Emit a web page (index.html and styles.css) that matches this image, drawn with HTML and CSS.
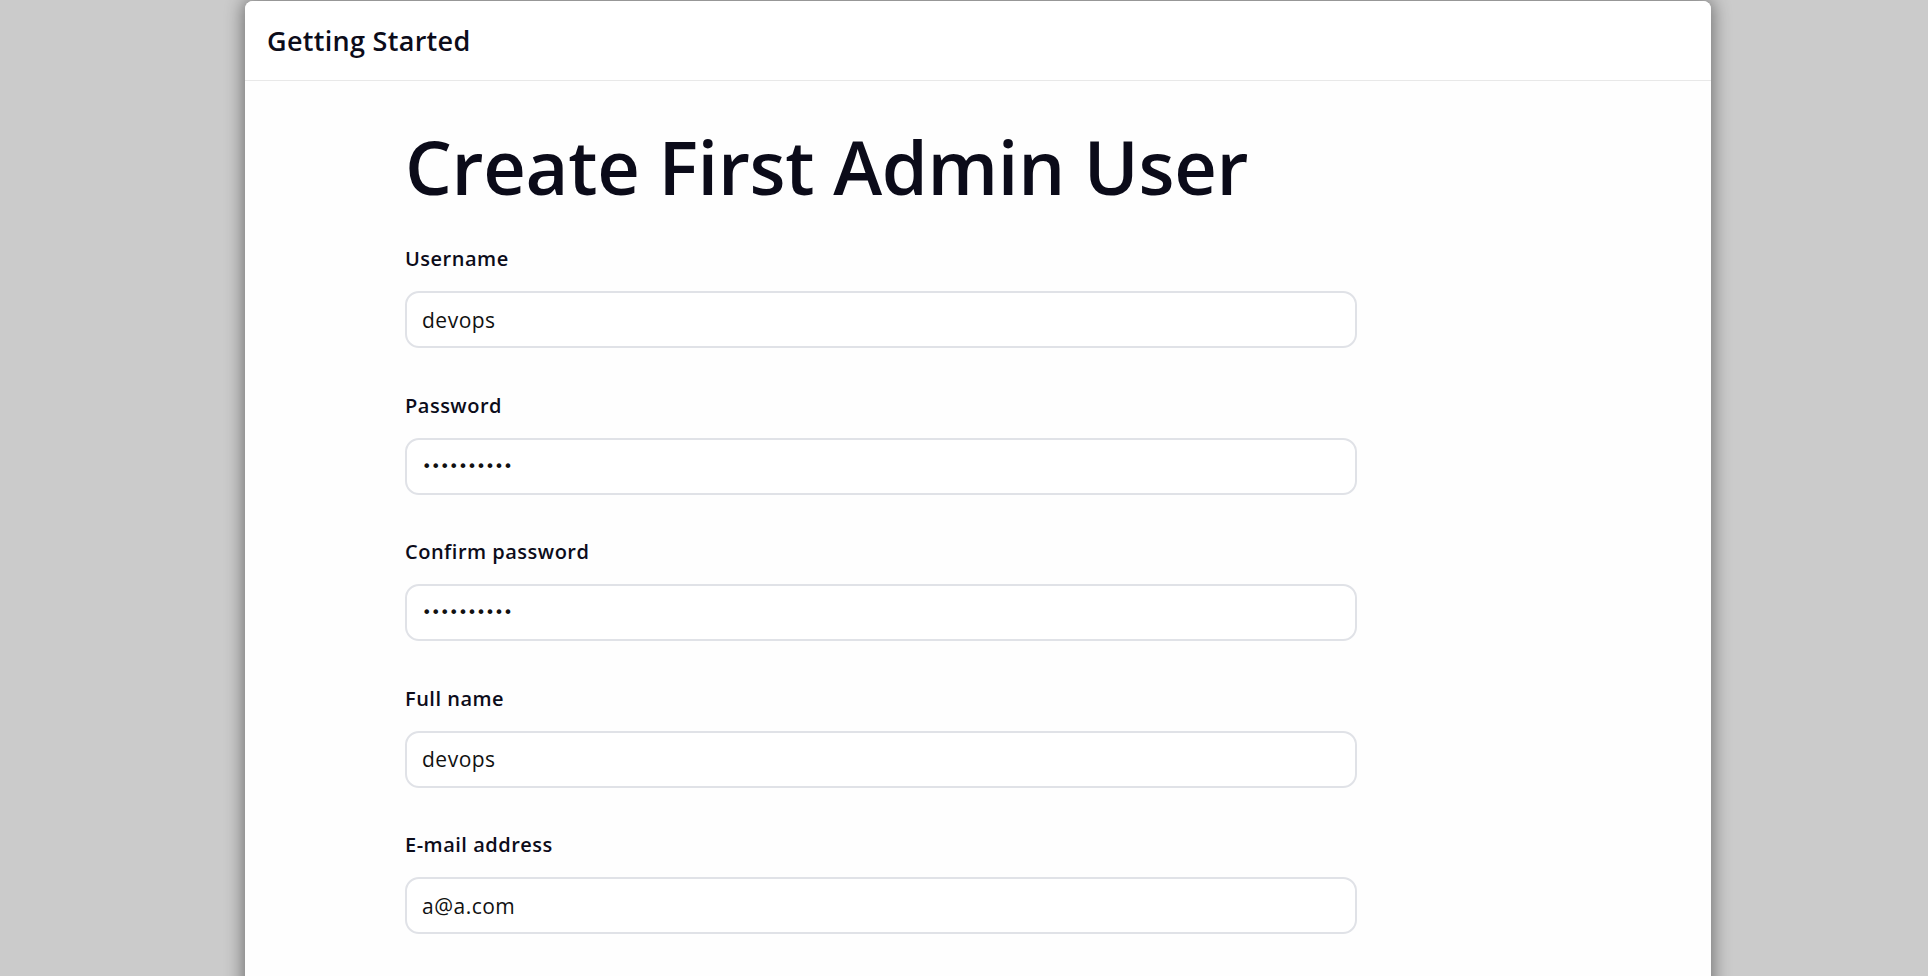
FILE: index.html
```html
<!DOCTYPE html>
<html lang="en">
<head>
<meta charset="utf-8">
<title>Getting Started</title>
<link rel="stylesheet" href="styles.css">
</head>
<body>
<div class="page">
  <div class="card">
    <div class="card-header">Getting Started</div>
    <div class="card-body">
      <h1 class="title">Create First Admin User</h1>
      <form class="form">
        <div class="field">
          <label class="label" for="u">Username</label>
          <input class="input" id="u" type="text" value="devops">
        </div>
        <div class="field">
          <label class="label" for="p">Password</label>
          <input class="input input-pw" id="p" type="password" value="devopsdevo">
        </div>
        <div class="field">
          <label class="label" for="c">Confirm password</label>
          <input class="input input-pw" id="c" type="password" value="devopsdevo">
        </div>
        <div class="field">
          <label class="label" for="f">Full name</label>
          <input class="input" id="f" type="text" value="devops">
        </div>
        <div class="field">
          <label class="label" for="e">E-mail address</label>
          <input class="input" id="e" type="text" value="a@a.com">
        </div>
      </form>
    </div>
  </div>
</div>
</body>
</html>
```
FILE: styles.css
```css
* { box-sizing: border-box; }
html, body {
  margin: 0;
  padding: 0;
  height: 100%;
  overflow: hidden;
  background: #cbcbcb;
  font-family: "Open Sans", "Noto Sans", sans-serif;
  color: #0c0c1a;
}
.page {
  padding: 1px 0 0 245px;
}
.card {
  width: 1466px;
  height: 1200px;
  background: #fefefe;
  border-radius: 8px 8px 0 0;
  box-shadow: 0 0 18px 2px rgba(0,0,0,0.45);
}
.card-header {
  height: 80px;
  padding: 0 0 0 22px;
  display: flex;
  align-items: center;
  font-size: 27px;
  font-weight: 600;
  border-bottom: 1px solid #e8e8e8;
  background: #fff;
  border-radius: 8px 8px 0 0;
  letter-spacing: 0.3px;
}
.card-body {
  padding: 0 0 0 160px;
}
.title {
  margin: 0;
  padding-top: 40px;
  height: 163px;
  font-size: 74px;
  font-weight: 600;
  line-height: 92px;
  letter-spacing: -0.3px;
  color: #0b0b19;
}
.form {
  display: flex;
  flex-direction: column;
  width: 952px;
}
.field {
  display: flex;
  flex-direction: column;
  margin-bottom: 42.5px;
}
.label {
  font-size: 20px;
  line-height: 30px;
  font-weight: 600;
  margin-bottom: 17px;
  letter-spacing: 0.5px;
}
.input {
  height: 57px;
  width: 100%;
  border: 2px solid #e0e2e7;
  border-radius: 14px;
  padding: 0 15px;
  font-family: "Open Sans", "Noto Sans", sans-serif;
  font-size: 21px;
  letter-spacing: 0.5px;
  color: #111;
  background: #fff;
  outline: none;
}
.input-pw {
  font-family: "DejaVu Sans", sans-serif;
  font-size: 16px;
  letter-spacing: -0.4px;
}
```
